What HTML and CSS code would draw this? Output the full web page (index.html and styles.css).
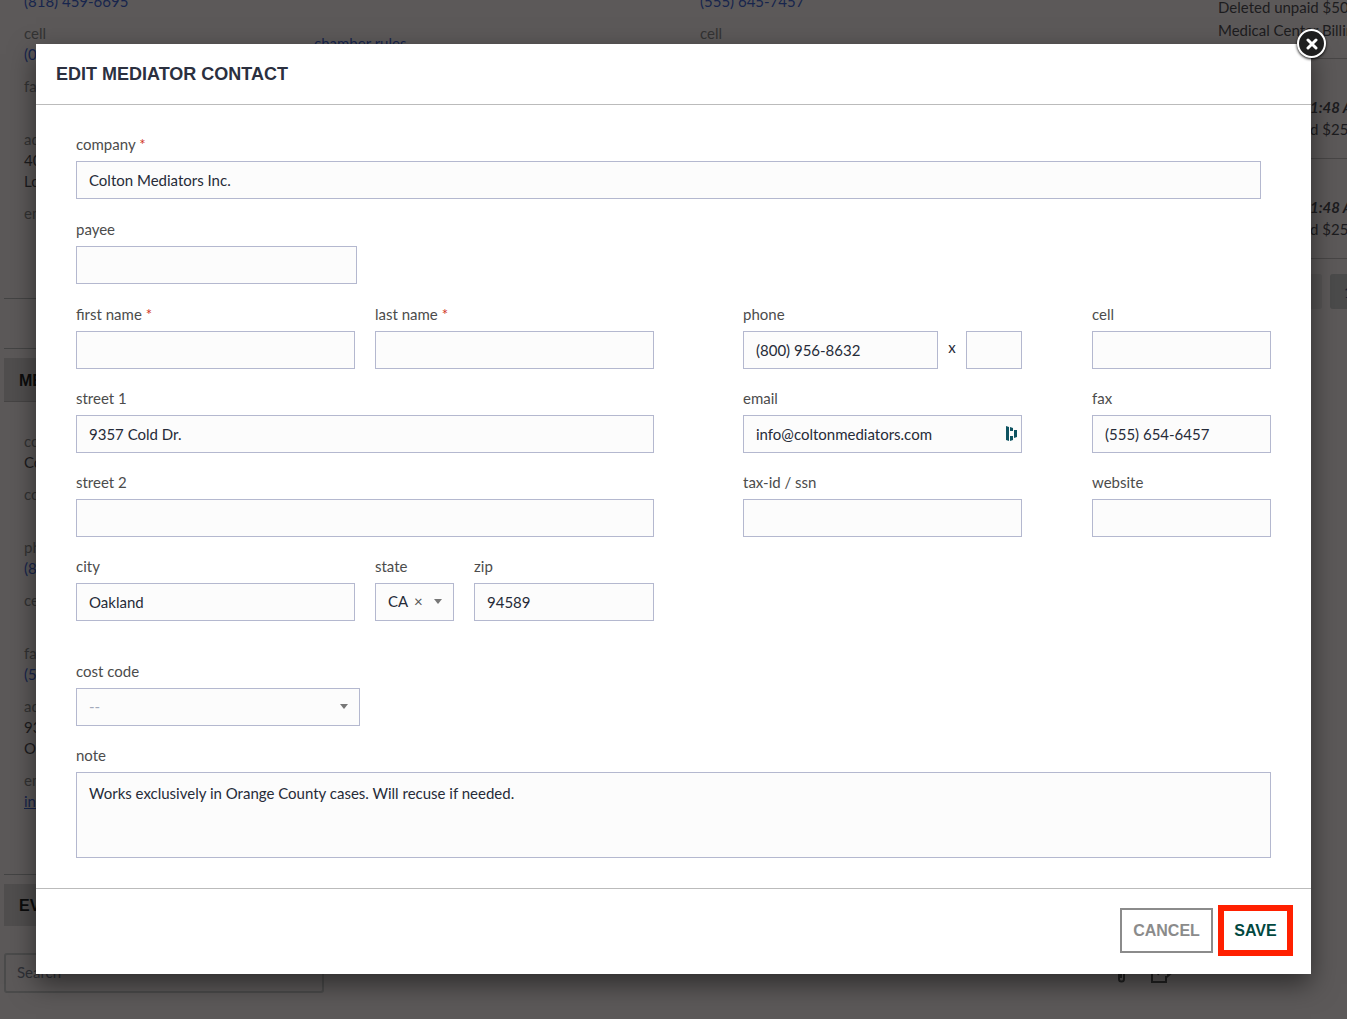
FILE: index.html
```html
<!DOCTYPE html>
<html lang="en">
<head>
<meta charset="utf-8">
<title>Edit Mediator Contact</title>
<link rel="stylesheet" href="styles.css">
</head>
<body>
<div class="page" inert>
  <main class="main">
    <div class="contacts">
      <dl class="details">
        <div><dd><a href="#">(818) 459-6695</a></dd></div>
        <div><dt>cell</dt><dd><a href="#">(0</a></dd></div>
        <div><dt>fax</dt><dd></dd></div>
        <div><dt>address</dt><dd>40</dd><dd>Lo</dd></div>
        <div><dt>email</dt><dd></dd></div>
      </dl>
      <div class="rules"><a href="#">chamber rules</a></div>
      <dl class="details">
        <div><dd><a href="#">(555) 645-7457</a></dd></div>
        <div><dt>cell</dt></div>
      </dl>
    </div>
    <hr class="rule">
    <section class="section">
      <h2 class="section-title lined">MEDIATOR</h2>
      <dl class="details mediator">
        <div><dt>company</dt><dd>Colton Mediators Inc.</dd></div>
        <div><dt>contact</dt><dd></dd></div>
        <div><dt>phone</dt><dd><a href="#">(800) 956-8632</a></dd></div>
        <div><dt>cell</dt><dd></dd></div>
        <div><dt>fax</dt><dd><a href="#">(555) 654-6457</a></dd></div>
        <div><dt>address</dt><dd>9357 Cold Dr.</dd><dd>Oakland, CA 94589</dd></div>
        <div><dt>email</dt><dd><a class="mail" href="#">info@coltonmediators.com</a></dd></div>
      </dl>
    </section>
    <section class="section">
      <h2 class="section-title">EVENTS</h2>
      <div class="toolbar">
        <input class="search" type="search" placeholder="Search" aria-label="Search">
        <svg class="tools" viewBox="0 0 58 28" aria-hidden="true">
          <path d="M3 6v14a2 2 0 0 0 5 0V6M5 8v11"/>
          <path d="M43 7h-7v16h14v-6M42 16c1-5 4-7 8-7"/>
          <path class="arrowhead" d="M51 5v14l7-6z"/>
        </svg>
      </div>
    </section>
  </main>
  <aside class="activity">
    <p class="entry first">Deleted unpaid $500<br>Medical Center Billing</p>
    <p class="entry"><time>1:48 AM</time><br>d $25</p>
    <p class="entry"><time>1:48 AM</time><br>d $25</p>
    <div class="pager"><button class="pager-prev" type="button" aria-label="Previous"></button><button type="button">1</button></div>
  </aside>
</div>

<div class="overlay">
  <form class="modal" role="dialog" aria-labelledby="modal-title">
    <button class="close" type="button" aria-label="Close">
      <svg viewBox="0 0 12 12" aria-hidden="true"><path d="M2 2l8 8M10 2l-8 8"/></svg>
    </button>
    <header class="modal-header"><h1 id="modal-title">EDIT MEDIATOR CONTACT</h1></header>
    <div class="modal-body">
      <div class="field company">
        <label for="company">company <span class="req">*</span></label>
        <input id="company" type="text" value="Colton Mediators Inc." required>
      </div>
      <div class="field payee">
        <label for="payee">payee</label>
        <input id="payee" type="text">
      </div>
      <div class="columns">
        <div class="stack">
          <div class="name-row">
            <div class="field">
              <label for="first">first name <span class="req">*</span></label>
              <input id="first" type="text">
            </div>
            <div class="field">
              <label for="last">last name <span class="req">*</span></label>
              <input id="last" type="text">
            </div>
          </div>
          <div class="field">
            <label for="street1">street 1</label>
            <input id="street1" type="text" value="9357 Cold Dr.">
          </div>
          <div class="field">
            <label for="street2">street 2</label>
            <input id="street2" type="text">
          </div>
          <div class="city-row">
            <div class="field">
              <label for="city">city</label>
              <input id="city" type="text" value="Oakland">
            </div>
            <div class="field">
              <label for="state">state</label>
              <div class="picker">
                <select id="state"><option>CA</option></select>
                <button class="clear" type="button" aria-label="Clear state">×</button>
                <span class="caret"></span>
              </div>
            </div>
            <div class="field">
              <label for="zip">zip</label>
              <input id="zip" type="text" value="94589">
            </div>
          </div>
        </div>
        <div class="contact-grid">
          <div class="field">
            <label for="phone">phone</label>
            <div class="phone-row">
              <input id="phone" type="tel" value="(800) 956-8632">
              <label class="ext-label" for="ext">x</label>
              <input id="ext" class="ext" type="text">
            </div>
          </div>
          <div class="field">
            <label for="cell">cell</label>
            <input id="cell" type="tel">
          </div>
          <div class="field">
            <label for="email">email</label>
            <div class="email-box">
              <input id="email" type="email" value="info@coltonmediators.com">
              <svg class="autofill" viewBox="0 0 12 16" aria-hidden="true">
                <path d="M1 0l3 1v14l-3-1zM5 1l3 1v3H5zM5 10h3v4l-3 1zM9 4h3v7l-3 1z"/>
              </svg>
            </div>
          </div>
          <div class="field">
            <label for="fax">fax</label>
            <input id="fax" type="tel" value="(555) 654-6457">
          </div>
          <div class="field">
            <label for="tax">tax-id / ssn</label>
            <input id="tax" type="text">
          </div>
          <div class="field">
            <label for="website">website</label>
            <input id="website" type="url">
          </div>
        </div>
      </div>
      <div class="stack billing">
        <div class="field cost">
          <label for="cost">cost code</label>
          <div class="picker empty">
            <select id="cost"><option>--</option></select>
            <span class="caret"></span>
          </div>
        </div>
        <div class="field">
          <label for="note">note</label>
          <textarea id="note">Works exclusively in Orange County cases. Will recuse if needed.</textarea>
        </div>
      </div>
    </div>
    <footer class="modal-footer">
      <button class="cancel" type="button">CANCEL</button>
      <button class="save" type="submit">SAVE</button>
    </footer>
  </form>
</div>
</body>
</html>
```
FILE: styles.css
```css
* { box-sizing: border-box; }

body {
  margin: 0;
  background: #5c5959;
  color: #1c1c1e;
  font: 15px/21px Lato, "Liberation Sans", sans-serif;
}

h1, h2, p, dl, dd { margin: 0; }
input, select, textarea, button { font: inherit; color: inherit; margin: 0; }

/* Page behind the dialog */
.page {
  display: flex;
  height: 100vh;
  overflow: hidden;
}

.page a { color: #17254d; text-decoration: none; }
.page a.mail { text-decoration: underline; }

.main { flex: 1; min-width: 0; padding-left: 4px; }

.contacts {
  display: grid;
  grid-template-columns: 290px 386px 1fr;
  height: 298px;
  margin-left: 20px;
}

.details {
  display: flex;
  flex-direction: column;
  gap: 11px;
  margin-top: -9px;
}

.details dt { color: #333; }
.details dd { min-height: 21px; }
.rules { padding-top: 33px; }

.rule {
  height: 51px;
  margin: 0 0 9px;
  border: solid #444;
  border-width: 1px 0;
}

.section-title {
  padding: 11px 15px 10px;
  background: #504e4e;
  color: #0c0c0c;
  font: bold 16px/21px "Liberation Sans", sans-serif;
}

.section-title.lined {
  padding-top: 12px;
  border-bottom: 1px solid #464444;
}

.mediator {
  margin: 29px 0 9px;
  padding: 0 20px 62px;
  border-bottom: 1px solid #444;
}

.toolbar {
  display: flex;
  justify-content: space-between;
  padding-top: 27px;
}

.search {
  width: 320px;
  height: 40px;
  padding: 0 11px 2px;
  background: none;
  border: 2px solid #4b4b4b;
  border-radius: 3px;
}

.search::placeholder { color: #2e3036; opacity: 1; }

.tools {
  width: 58px;
  height: 28px;
  margin: 6px 44px 0 0;
  fill: none;
  stroke: #222;
  stroke-width: 2;
}

.tools .arrowhead { fill: #222; stroke: none; }

.activity { width: 129px; white-space: nowrap; line-height: 22px; }

.entry {
  height: 100px;
  padding: 37px 0 0 92px;
  border-bottom: 1px solid #484646;
}

.entry.first {
  height: 63px;
  margin-top: -4px;
  padding: 0;
  line-height: 23px;
}

.entry time { font-weight: bold; font-style: italic; }

.pager { display: flex; gap: 8px; padding: 15px 0 0 64px; }

.pager button {
  flex: none;
  width: 40px;
  height: 35px;
  padding: 0 14px;
  background: #4b4b4b;
  border: 0;
  border-radius: 3px;
  color: #1b2133;
  text-align: left;
}

.pager .pager-prev { background: #555353; }

/* Dialog */
.overlay {
  position: absolute;
  inset: 0;
  padding: 44px 36px;
}

.modal {
  position: relative;
  background: #fff;
  box-shadow: 0 10px 25px rgba(0, 0, 0, .5);
  color: #262b38;
}

.close {
  position: absolute;
  top: -15px;
  right: -15px;
  display: grid;
  place-items: center;
  width: 29px;
  height: 29px;
  padding: 0;
  background: #1e1e1e;
  border: 2px solid #fff;
  border-radius: 50%;
  box-shadow: 0 1px 3px #000;
}

.close svg {
  width: 12px;
  height: 12px;
  stroke: #fff;
  stroke-width: 3;
  stroke-linecap: round;
}

.modal-header {
  padding: 19px 20px;
  border-bottom: 1px solid #bbb;
}

.modal-header h1 {
  font: bold 18px/22px "Liberation Sans", sans-serif;
  color: #2b303f;
}

.modal-body {
  display: flex;
  flex-direction: column;
  gap: 21px;
  padding: 30px 40px 30px;
}

.field { display: flex; flex-direction: column; min-width: 0; }
.field label { height: 26px; line-height: 18px; color: #4c4c4c; }
.req { color: #d0331c; }

.field input,
.field textarea,
.picker {
  width: 100%;
  height: 38px;
  padding: 0 12px 1px;
  background: #fcfcfc;
  border: 1px solid #b4b8cf;
  border-radius: 0;
}

.field textarea {
  display: block;
  height: 86px;
  padding-top: 10px;
  resize: none;
}

.company { margin-right: 10px; }
.payee { width: 281px; }
.cost { width: 284px; }

.columns {
  display: grid;
  grid-template-columns: 578fr 528fr;
  gap: 89px;
}

.stack { display: flex; flex-direction: column; gap: 20px; }
.billing { margin-top: 20px; }
.name-row { display: grid; grid-template-columns: 1fr 1fr; gap: 20px; }
.city-row { display: grid; grid-template-columns: 279fr 79fr 180fr; gap: 20px; }

.contact-grid {
  display: grid;
  grid-template-columns: 279fr 179fr;
  align-content: start;
  gap: 20px 70px;
}

.phone-row { display: flex; }
.phone-row input { flex: 1; min-width: 0; }
.phone-row .ext { flex: none; width: 56px; }

.phone-row .ext-label {
  width: 28px;
  height: 38px;
  line-height: 32px;
  text-align: center;
  color: #262b38;
}

.email-box { position: relative; }

.autofill {
  position: absolute;
  right: 5px;
  top: 11px;
  width: 12px;
  height: 16px;
  fill: #0e5361;
}

.picker { display: flex; align-items: center; padding-right: 11px; }

.picker select {
  appearance: none;
  padding: 0;
  background: none;
  border: 0;
}

.clear {
  padding: 0 0 0 5px;
  background: none;
  border: 0;
  color: #555;
}

.caret {
  margin-left: auto;
  border: solid transparent;
  border-width: 5px 4px 0;
  border-top-color: #777;
}

.picker.empty { color: #a3aabb; }

.modal-footer {
  display: flex;
  justify-content: flex-end;
  align-items: center;
  gap: 5px;
  padding: 16px 18px 18px;
  border-top: 1px solid #bbb;
}

.modal-footer button {
  padding: 0;
  background: #fff;
  font: bold 16px/21px "Liberation Sans", sans-serif;
}

.modal-footer .cancel {
  width: 93px;
  height: 45px;
  border: 2px solid #8b8b8b;
  color: #8b8b8b;
}

.modal-footer .save {
  width: 75px;
  height: 51px;
  border: 6px solid #ff2000;
  color: #02483f;
}
```
